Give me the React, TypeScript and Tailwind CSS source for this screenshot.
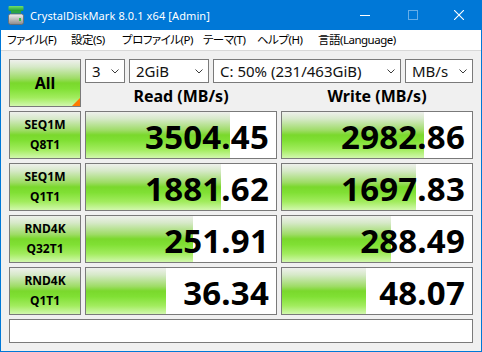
import React from "react";

const rows = [
  { l1: "SEQ1M", l2: "Q8T1", r: "3504.45", w: "2982.86" },
  { l1: "SEQ1M", l2: "Q1T1", r: "1881.62", w: "1697.83" },
  { l1: "RND4K", l2: "Q32T1", r: "251.91", w: "288.49" },
  { l1: "RND4K", l2: "Q1T1", r: "36.34", w: "48.07" },
];

const menu: [string, string][] = [
  ["ファイル(F)", "w-[64px]"],
  ["設定(S)", "w-[51px]"],
  ["プロファイル(P)", "w-[81px]"],
  ["テーマ(T)", "w-[54px]"],
  ["ヘルプ(H)", "w-[61px]"],
  ["言語(Language)", "w-[100px]"],
];

function barW(v: string) {
  return Math.round(Math.max(0, 32.3 * Math.log10(parseFloat(v)) + 29.5));
}

const green =
  "bg-[linear-gradient(180deg,#eef0ec_0%,#d6e9c8_15%,#9edc66_40%,#7ad82c_50%,#80e034_62%,#a2ec5e_82%,#d2f8ae_100%)]";

function Chevron() {
  return (
    <svg width="8" height="5" viewBox="0 0 8 5" className="shrink-0">
      <polyline points="0.5,0.5 4,4 7.5,0.5" fill="none" stroke="#3c3c3c" strokeWidth="1" />
    </svg>
  );
}

function Combo({ text, w }: { text: string; w: string }) {
  return (
    <div className={`${w} h-[24px] bg-white border border-[#7a7a7a] flex items-center justify-between pl-[6px] pr-[5px] text-[15px] text-[#111] leading-none`}>
      <span>{text}</span>
      <Chevron />
    </div>
  );
}

function Bar({ v }: { v: string }) {
  return (
    <div className="relative w-[192px] h-[48px] bg-white border border-[#7a7a7a]">
      <div className={`absolute left-0 top-0 bottom-0 ${green}`} style={{ width: barW(v) }} />
      <div className="absolute inset-0 flex items-center justify-end pr-[7px] pt-[3px] text-[33px] font-bold text-black leading-none tracking-[0.2px]">
        {v}
      </div>
    </div>
  );
}

function Icon() {
  return (
    <svg width="16" height="19" viewBox="0 0 16 19">
      <defs>
        <linearGradient id="g1" x1="0" y1="0" x2="0" y2="1">
          <stop offset="0" stopColor="#6fe06a" />
          <stop offset="1" stopColor="#1f9b3a" />
        </linearGradient>
        <linearGradient id="g2" x1="0" y1="0" x2="0" y2="1">
          <stop offset="0" stopColor="#f2f2f2" />
          <stop offset="1" stopColor="#8a8a8a" />
        </linearGradient>
      </defs>
      <rect x="0.5" y="0" width="15" height="5" rx="1" fill="url(#g1)" />
      <rect x="3" y="5" width="10" height="2.5" fill="#2aa544" />
      <rect x="0.5" y="8" width="15" height="10.5" rx="2" fill="url(#g2)" stroke="#6a6a6a" strokeWidth="0.8" />
      <rect x="11" y="12" width="2" height="3" fill="#34c24a" />
    </svg>
  );
}

export default function App() {
  return (
    <div className="w-[482px] h-[352px] bg-[#0078d7] flex flex-col px-[1px] pb-[1px] font-['Noto_Sans','Noto_Sans_CJK_JP',sans-serif] overflow-hidden">
      {/* title bar */}
      <div className="h-[30px] -mx-[1px] flex items-center text-white shrink-0">
        <div className="w-[30px] flex justify-center pl-[2px]">
          <Icon />
        </div>
        <span className="text-[11px] leading-none tracking-[0.1px]">CrystalDiskMark 8.0.1 x64 [Admin]</span>
        <div className="ml-auto flex h-full">
          <div className="w-[46px] flex items-center justify-center pr-[4px]">
            <div className="w-[10px] h-[1px] bg-white" />
          </div>
          <div className="w-[46px] flex items-center justify-center">
            <div className="w-[10px] h-[10px] border border-[#66aee8]" />
          </div>
          <div className="w-[46px] flex items-center justify-center">
            <svg width="10" height="10" viewBox="0 0 10 10">
              <path d="M0,0 L10,10 M10,0 L0,10" stroke="white" strokeWidth="1.1" />
            </svg>
          </div>
        </div>
      </div>
      {/* menu */}
      <div className="h-[20px] bg-white flex items-center pl-[6px] text-[11.5px] tracking-[-0.5px] text-black leading-none shrink-0 [font-feature-settings:'palt']">
        {menu.map(([t, w]) => (
          <span key={t} className={`${w} shrink-0 whitespace-nowrap`}>
            {t}
          </span>
        ))}
      </div>
      <div className="h-[1px] bg-[#d8d8d8] shrink-0" />
      {/* body */}
      <div className="flex-1 bg-[#f0f0f0] px-[8px] pt-[8px] flex flex-col gap-[4px]">
        <div className="flex gap-[4px]">
          <div className={`relative w-[72px] h-[48px] border border-[#7a7a7a] ${green} flex items-center justify-center text-[16px] font-bold text-black`}>
            All
            <div className="absolute right-0 bottom-0 w-0 h-0 border-l-[8px] border-l-transparent border-b-[8px] border-b-[#ff7a00]" />
          </div>
          <div className="flex flex-col w-[388px]">
            <div className="flex gap-[4px]">
              <Combo text="3" w="w-[40px]" />
              <Combo text="2GiB" w="w-[80px]" />
              <Combo text="C: 50% (231/463GiB)" w="w-[188px]" />
              <Combo text="MB/s" w="w-[68px]" />
            </div>
            <div className="flex gap-[4px] h-[24px]">
              <div className="w-[192px] flex items-center justify-center text-[16px] font-bold text-black leading-none pt-[1px]">Read (MB/s)</div>
              <div className="w-[192px] flex items-center justify-center text-[16px] font-bold text-black leading-none pt-[1px]">Write (MB/s)</div>
            </div>
          </div>
        </div>
        {rows.map((r, i) => (
          <div key={i} className="flex gap-[4px]">
            <div className={`w-[72px] h-[48px] border border-[#7a7a7a] ${green} flex flex-col items-center justify-center text-[12px] font-bold text-black leading-[20px]`}>
              <span>{r.l1}</span>
              <span>{r.l2}</span>
            </div>
            <Bar v={r.r} />
            <Bar v={r.w} />
          </div>
        ))}
        <div className="h-[24px] bg-white border border-[#7a7a7a]" />
      </div>
    </div>
  );
}
